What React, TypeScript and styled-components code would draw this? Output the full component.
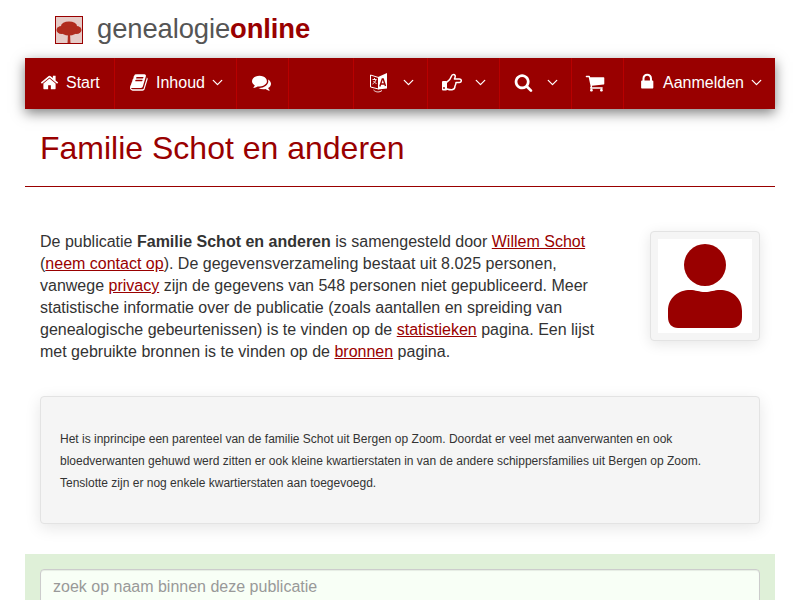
import React from "react";
import styled, { createGlobalStyle } from "styled-components";
import { ChevronDown } from "lucide-react";

const Global = createGlobalStyle`
  html, body { margin: 0; padding: 0; background: #fff; height: 600px; overflow: hidden; }
  body { font-family: "Liberation Sans", Arial, sans-serif; font-size: 16px; line-height: 22px; color: #333; }
  * { box-sizing: border-box; }
`;

const Page = styled.div`
  width: 750px;
  margin: 0 auto;
`;

const Brand = styled.header`
  height: 58px;
  display: flex;
  align-items: center;
  padding: 0 0 0 30px;
`;

const LogoBox = styled.div`
  width: 28px;
  height: 28px;
  border: 1px solid #990000;
  background: #e6cbc7;
  margin-right: 14px;
  margin-top: 2px;
  display: flex;
  overflow: hidden;
  svg { filter: blur(0.6px); }
`;

const Wordmark = styled.div`
  font-size: 27.4px;
  line-height: 30px;
  color: #555;
  letter-spacing: -0.1px;
  b { color: #990000; font-weight: 700; }
`;

const Nav = styled.nav`
  height: 51px;
  background: #990000;
  display: flex;
  justify-content: space-between;
  box-shadow: 0 4px 12px rgba(0, 0, 0, 0.5);
`;

const NavGroup = styled.div`
  display: flex;
`;

const NavItem = styled.a<{ $w: number; $side?: "left" | "right" }>`
  width: ${(p) => p.$w}px;
  height: 51px;
  display: flex;
  align-items: center;
  padding: 0 0 2px 15px;
  color: #fff;
  font-size: 16px;
  ${(p) => (p.$side === "left" ? "border-left: 1px solid #b80000;" : "border-right: 1px solid #b80000;")}
`;

const IconSlot = styled.span<{ $w: number; $dx?: number }>`
  width: ${(p) => p.$w}px;
  margin-left: ${(p) => p.$dx ?? 0}px;
  flex: none;
  display: flex;
  align-items: center;
`;

const GlyphSvg = styled.svg<{ $size: number }>`
  display: block;
  flex: none;
  width: ${(p) => p.$size}px;
  height: ${(p) => p.$size}px;
  fill: currentColor;
`;

const Chevron = styled(ChevronDown)`
  margin-left: auto;
  margin-right: 10px;
  flex: none;
`;

const Title = styled.h1`
  margin: 0;
  height: 78px;
  padding: 22px 15px 0;
  font-size: 32px;
  line-height: 34px;
  font-weight: 400;
  color: #990000;
  border-bottom: 1px solid #990000;
`;

const Intro = styled.section`
  display: flex;
  justify-content: space-between;
  padding: 44px 15px 0;
  height: 209px;
`;

const IntroText = styled.p`
  margin: 0;
  width: 570px;
  a { color: #990000; text-decoration: underline; }
`;

const Thumb = styled.div`
  width: 110px;
  height: 110px;
  background: #f5f5f5;
  border: 1px solid #e3e3e3;
  border-radius: 4px;
  padding: 7px;
  box-shadow: 0 3px 14px rgba(0, 0, 0, 0.1);
  svg { display: block; background: #fff; }
`;

const Well = styled.section`
  margin: 0 15px;
  height: 128px;
  background: #f5f5f5;
  border: 1px solid #e3e3e3;
  border-radius: 4px;
  padding: 31px 19px;
  font-size: 12px;
  line-height: 22px;
  box-shadow: 0 4px 16px rgba(0, 0, 0, 0.1);
`;

const SearchBand = styled.section`
  margin-top: 30px;
  background: #dff0d8;
  padding: 15px 15px;
  height: 60px;
`;

const SearchInput = styled.input`
  display: block;
  width: 100%;
  height: 36px;
  padding: 6px 12px;
  border: 1px solid #ccc;
  border-radius: 4px;
  background: #f8fff6;
  font: 16px "Liberation Sans", Arial, sans-serif;
  box-shadow: inset 0 1px 1px rgba(0, 0, 0, 0.075);
  &::placeholder { color: #999; opacity: 1; }
`;

const ICONS = {
  home: "M1472 992v480q0 26-19 45t-45 19h-384v-384h-256v384h-384q-26 0-45-19t-19-45v-480q0-1 .5-3t.5-3l575-474 575 474q1 2 1 6zm223-69l-62 74q-8 9-21 11h-3q-13 0-21-7l-692-577-692 577q-12 8-24 7-13-2-21-11l-62-74q-8-10-7-23.5t11-21.5l719-599q32-26 76-26t76 26l244 204v-195q0-14 9-23t23-9h192q14 0 23 9t9 23v408l219 182q10 8 11 21.5t-7 23.5z",
  book: "M1639 478q40 57 18 129l-275 906q-19 64-76.5 107.5t-122.5 43.5h-923q-77 0-148.5-53.5t-99.5-131.5q-24-67-2-127 0-4 3-27t4-37q1-8-3-21.5t-3-19.5q2-11 8-21t16.5-23.5 16.5-23.5q23-38 45-91.5t30-91.5q3-10 .5-30t-.5-28q3-11 17-28t17-23q21-36 42-92t25-90q1-9-2.5-32t.5-28q4-13 22-30.5t22-22.5q19-26 42.5-84.5t27.5-96.5q1-8-3-25.5t-2-26.5q2-8 9-18t18-23 17-21q8-12 16.5-30.5t15-35 16-36 19.5-32 26.5-23.5 36-11.5 47.5 5.5l-1 3q38-9 51-9h761q74 0 114 56t18 130l-274 906q-36 119-71.5 153.5t-128.5 34.5h-869q-27 0-38 15-11 16-1 43 24 70 144 70h923q29 0 56-15.5t35-41.5l300-987q7-22 5-57 38 15 59 43zm-1064 2q-4 13 2 22.5t20 9.5h608q13 0 25.5-9.5t16.5-22.5l21-64q4-13-2-22.5t-20-9.5h-608q-13 0-25.5 9.5t-16.5 22.5zm-83 256q-4 13 2 22.5t20 9.5h608q13 0 25.5-9.5t16.5-22.5l21-64q4-13-2-22.5t-20-9.5h-608q-13 0-25.5 9.5t-16.5 22.5z",
  comments: "M1408 768q0 139-94 257t-256.5 186.5-353.5 68.5q-86 0-176-16-124 88-278 128-36 9-86 16h-3q-11 0-20.5-8t-11.5-21q-1-3-1-6.5t.5-6.5 2-6l2.5-5 3.5-5.5 4-5 4.500-5 4-4.500q5-6 23-25t26-29.500 22.500-29 25-38.500 20.500-44q-124-72-195-177t-71-224q0-139 94-257t256.500-186.500 353.500-68.500 353.500 68.500 256.500 186.500 94 257zm384 256q0 120-71 224.500t-195 176.500q10 24 20.500 44t25 38.500 22.500 29 26 29.500 23 25q1 1 4 4.500t4.500 5 4 5 3.500 5.500l2.500 5 2 6 .5 6.500-1 6.500q-3 14-13 22t-22 7q-50-7-86-16-154-40-278-128-90 16-176 16-271 0-472-132 58 4 88 4 161 0 309-45t264-129q125-92 192-212t67-254q0-77-23-152 129 71 204 178t75 230z",
  search: "M1216 832q0-185-131.500-316.500t-316.500-131.500-316.500 131.500-131.500 316.500 131.500 316.500 316.500 131.500 316.500-131.500 131.500-316.500zm512 832q0 52-38 90t-90 38q-54 0-90-38l-343-342q-179 124-399 124-143 0-273.500-55.500t-225-150-150-225-55.500-273.500 55.500-273.500 150-225 225-150 273.500-55.500 273.500 55.500 225 150 150 225 55.500 273.500q0 220-124 399l343 343q37 37 37 90z",
  cart: "M704 1536q0 52-38 90t-90 38-90-38-38-90 38-90 90-38 90 38 38 90zm896 0q0 52-38 90t-90 38-90-38-38-90 38-90 90-38 90 38 38 90zm128-1088v512q0 24-16.500 42.500t-40.500 21.500l-1044 122q13 60 13 70 0 16-24 64h920q26 0 45 19t19 45-19 45-45 19h-1024q-26 0-45-19t-19-45q0-11 8-31.500t16-36 21.500-40 15.500-29.500l-177-823h-204q-26 0-45-19t-19-45 19-45 45-19h256q16 0 28.500 6.500t19.500 15.500 13 24.500 8 26 5.500 29.500 4.500 26h1201q26 0 45 19t19 45z",
  lock: "M520 704h512v-192q0-106-75-181t-181-75-181 75-75 181v192zm832 96v576q0 40-28 68t-68 28h-960q-40 0-68-28t-28-68v-576q0-40 28-68t68-28h32v-192q0-184 132-316t316-132 316 132 132 316v192h32q40 0 68 28t28 68z",
};

const Glyph = ({ name, size = 19 }: { name: keyof typeof ICONS; size?: number }) => (
  <GlyphSvg $size={size} viewBox="0 0 1792 1792">
    <path d={ICONS[name]} fillRule="evenodd" />
  </GlyphSvg>
);

const HandRight = () => (
  <svg width="20" height="20" viewBox="0 0 20 20" fill="none">
    <rect x="0" y="8" width="5" height="9.500" rx="1" fill="#fff" />
    <circle cx="2" cy="15" r="0.900" fill="#990000" />
    <path
      d="M5 9 C7 8 8.500 6 9.300 3.500 C9.700 2.200 10.400 1.500 11.500 1.500 C13 1.500 13.600 3 13 4.500 L12.400 6 H17.300 C18.600 6 19.300 6.800 19.300 7.700 C19.300 8.700 18.500 9.500 17.300 9.500 H14 C14 11 13.500 12 13 13 C13 15 12 16.500 10 16.800 C8 17 6.500 16.500 5 16"
      stroke="#fff"
      strokeWidth="1.500"
      strokeLinecap="round"
      strokeLinejoin="round"
    />
  </svg>
);

const Translate = () => (
  <svg width="20" height="22" viewBox="0 0 20 22" fill="none">
    <path d="M1.5 3 L9.5 5.5 V17 L1.5 15 Z" stroke="#fff" strokeWidth="1" />
    <path d="M9 5 L18 1 V16.5 L9 17.5 Z" fill="#fff" />
    <path d="M3.5 7.5 H7.5 M5.5 6 V7.5 M7 7.5 C6.6 9.500 5 11 3.5 12 M4.500 9 C5 10 6 11 7.500 11.500" stroke="#fff" strokeWidth=".9" />
    <path d="M10.800 14.500 L13.300 7 H14.200 L16.500 14 M12 12 H15.500" stroke="#990000" strokeWidth="1.400" />
    <path d="M4.500 18 C7 20.500 10.500 20.500 13 18.500" stroke="#fff" strokeWidth=".9" />
  </svg>
);

const Person = () => (
  <svg width="94" height="94" viewBox="0 0 94 94">
    <circle cx="47" cy="26" r="21" fill="#990000" />
    <path d="M10 72 C10 58 21 51 32 51 C38 51 41 53 47 53 C53 53 56 51 62 51 C73 51 84 58 84 72 V78 C84 85 80 89 74 89 H20 C14 89 10 85 10 78 Z" fill="#990000" />
  </svg>
);

const Tree = () => (
  <svg width="26" height="26" viewBox="0 0 26 26" fill="#b02c1e">
    <path d="M11.500 26 L12 17 H14 L14.500 26 Z" />
    <ellipse cx="13" cy="9" rx="8" ry="4.500" />
    <ellipse cx="5.500" cy="13" rx="5" ry="4" />
    <ellipse cx="20.500" cy="13" rx="5" ry="4" />
    <ellipse cx="13" cy="14" rx="8" ry="4.500" />
  </svg>
);

const Chev = () => <Chevron size={17} strokeWidth={1.8} />;

export default function App() {
  return (
    <Page>
      <Global />
      <Brand>
        <LogoBox><Tree /></LogoBox>
        <Wordmark>genealogie<b>online</b></Wordmark>
      </Brand>
      <Nav>
        <NavGroup>
          <NavItem $w={90}><IconSlot $w={26}><Glyph name="home" /></IconSlot>Start</NavItem>
          <NavItem $w={122}><IconSlot $w={26}><Glyph name="book" /></IconSlot>Inhoud<Chev /></NavItem>
          <NavItem $w={52}><IconSlot $w={22}><Glyph name="comments" /></IconSlot></NavItem>
        </NavGroup>
        <NavGroup>
          <NavItem $w={74} $side="left"><IconSlot $w={20}><Translate /></IconSlot><Chev /></NavItem>
          <NavItem $w={72} $side="left"><IconSlot $w={22} $dx={-1}><HandRight /></IconSlot><Chev /></NavItem>
          <NavItem $w={72} $side="left"><IconSlot $w={20} $dx={-1}><Glyph name="search" size={19} /></IconSlot><Chev /></NavItem>
          <NavItem $w={52} $side="left"><IconSlot $w={20} $dx={-2}><Glyph name="cart" size={20} /></IconSlot></NavItem>
          <NavItem $w={152} $side="left"><IconSlot $w={24}><Glyph name="lock" /></IconSlot>Aanmelden<Chev /></NavItem>
        </NavGroup>
      </Nav>
      <Title>Familie Schot en anderen</Title>
      <Intro>
        <IntroText>
          De publicatie <b>Familie Schot en anderen</b> is samengesteld door <a>Willem Schot</a> (<a>neem contact op</a>). De gegevensverzameling bestaat uit 8.025 personen, vanwege <a>privacy</a> zijn de gegevens van 548 personen niet gepubliceerd. Meer statistische informatie over de publicatie (zoals aantallen en spreiding van genealogische gebeurtenissen) is te vinden op de <a>statistieken</a> pagina. Een lijst met gebruikte bronnen is te vinden op de <a>bronnen</a> pagina.
        </IntroText>
        <Thumb><Person /></Thumb>
      </Intro>
      <Well>
        Het is inprincipe een parenteel van de familie Schot uit Bergen op Zoom. Doordat er veel met aanverwanten en ook bloedverwanten gehuwd werd zitten er ook kleine kwartierstaten in van de andere schippersfamilies uit Bergen op Zoom. Tenslotte zijn er nog enkele kwartierstaten aan toegevoegd.
      </Well>
      <SearchBand>
        <SearchInput placeholder="zoek op naam binnen deze publicatie" />
      </SearchBand>
    </Page>
  );
}
